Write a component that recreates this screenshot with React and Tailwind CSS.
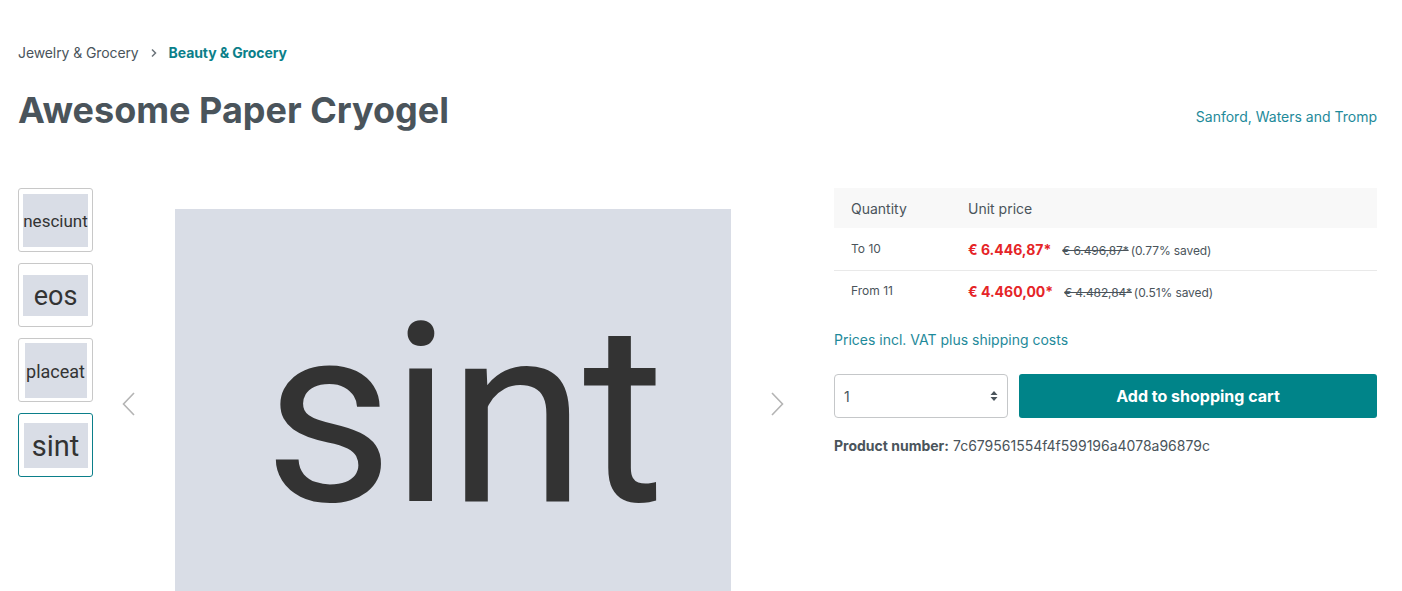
import React from "react";

const thumbs = [
  { label: "nesciunt", box: "w-[65px] h-[53px]", text: "text-[17px]" },
  { label: "eos", box: "w-[65px] h-[41px]", text: "text-[27px]" },
  { label: "placeat", box: "w-[62px] h-[55px]", text: "text-[18px]" },
  { label: "sint", box: "w-[64px] h-[45px]", text: "text-[29px]", active: true },
];

const prices = [
  { qty: "To 10", price: "€ 6.446,87*", list: "€ 6.496,87*", saved: "(0.77% saved)" },
  { qty: "From 11", price: "€ 4.460,00*", list: "€ 4.482,84*", saved: "(0.51% saved)" },
];

const Chevron = ({ dir }) => (
  <svg width="13" height="24" viewBox="0 0 13 24" fill="none">
    <path
      d={dir === "left" ? "M12 1 L1.5 12 L12 23" : "M1 1 L11.5 12 L1 23"}
      stroke="#b4b4b4"
      strokeWidth="1.6"
    />
  </svg>
);

export default function App() {
  return (
    <div
      className="min-h-screen bg-white pl-[18px] pr-[25px] pt-[42px] text-[#4a545b]"
      style={{ fontFamily: "Inter, 'Liberation Sans', sans-serif" }}
    >
      {/* BREADCRUMB */}
      <nav className="flex items-center text-[14px] leading-[21px] tracking-[-0.1px]">
        <span>Jewelry &amp; Grocery</span>
        <svg className="ml-[11px] mr-[11px]" width="8" height="10" viewBox="0 0 8 10" fill="none">
          <path d="M2 1.5 L5.5 5 L2 8.5" stroke="#6b747a" strokeWidth="1.5" />
        </svg>
        <span className="font-bold text-[#0b7f8a]">Beauty &amp; Grocery</span>
      </nav>

      {/* TITLE */}
      <div className="mt-[26px] flex items-start justify-between">
        <h1 className="text-[36px] font-bold leading-[43px] text-[#4a545b]">
          Awesome Paper Cryogel
        </h1>
        <a className="mt-[17px] text-[14px] leading-[21px] text-[#1e8a9a]">
          Sanford, Waters and Tromp
        </a>
      </div>

      <div className="mt-[56px] flex items-start">
        {/* GALLERY */}
        <div className="flex items-start">
          <div className="flex w-[75px] flex-col gap-[11px]">
            {thumbs.map((t) => (
              <div
                key={t.label}
                className={`flex h-[64px] w-[75px] items-center justify-center rounded-[3px] border ${
                  t.active ? "border-[#0b7f8a]" : "border-[#c8c8c8]"
                }`}
              >
                <div
                  className={`flex items-center justify-center overflow-hidden whitespace-nowrap bg-[#d9dde6] pt-[3px] leading-none text-[#333] ${t.box} ${t.text}`}
                  style={{ fontFamily: "Roboto, 'Noto Sans', sans-serif" }}
                >
                  {t.label}
                </div>
              </div>
            ))}
          </div>

          <div className="ml-[29px] mt-[204px]">
            <Chevron dir="left" />
          </div>

          <div
            className="ml-[40px] mt-[21px] flex h-[404px] w-[556px] items-center justify-center bg-[#d9dde6] pl-[20px] pt-[10px] text-[250px] leading-none tracking-[-3px] text-[#333]"
            style={{ fontFamily: "Roboto, 'Noto Sans', sans-serif" }}
          >
            sint
          </div>

          <div className="ml-[40px] mt-[204px]">
            <Chevron dir="right" />
          </div>
        </div>

        {/* BUY BOX */}
        <div className="ml-auto w-[543px]">
          <table className="w-full border-collapse text-left">
            <thead>
              <tr className="bg-[#f8f8f8] text-[14px]">
                <th className="h-[40px] w-[134px] pl-[17px] font-normal">Quantity</th>
                <th className="font-normal">Unit price</th>
              </tr>
            </thead>
            <tbody>
              {prices.map((p, i) => (
                <tr key={p.qty} className={i === 0 ? "border-b border-[#e9e9e9]" : ""}>
                  <td className="h-[42px] pl-[17px] text-[12px]">{p.qty}</td>
                  <td className="whitespace-nowrap">
                    <span className="text-[14px] font-bold text-[#e52427]">{p.price}</span>
                    <span className="ml-[11px] text-[12px] tracking-[-0.1px] line-through">{p.list}</span>
                    <span className="ml-[2px] text-[12px] tracking-[-0.1px]">{p.saved}</span>
                  </td>
                </tr>
              ))}
            </tbody>
          </table>

          <p className="mt-[17px] text-[14px] leading-[21px] text-[#1e8a9a]">
            Prices incl. VAT plus shipping costs
          </p>

          <div className="mt-[24px] flex gap-[11px]">
            <div className="flex h-[44px] w-[174px] items-center justify-between rounded-[4px] border border-[#c5c7c9] pl-[9px] pr-[9px] text-[14px]">
              <span>1</span>
              <svg width="8" height="12" viewBox="0 0 8 12">
                <path d="M4 1 L7.5 5 L0.5 5 Z" fill="#4a545b" />
                <path d="M4 11 L7.5 7 L0.5 7 Z" fill="#4a545b" />
              </svg>
            </div>
            <button className="h-[44px] flex-1 rounded-[3px] bg-[#008489] text-[16px] font-bold text-white">
              Add to shopping cart
            </button>
          </div>

          <p className="mt-[17px] text-[14px] leading-[21px]">
            <span className="font-bold">Product number:</span> 7c679561554f4f599196a4078a96879c
          </p>
        </div>
      </div>
    </div>
  );
}
